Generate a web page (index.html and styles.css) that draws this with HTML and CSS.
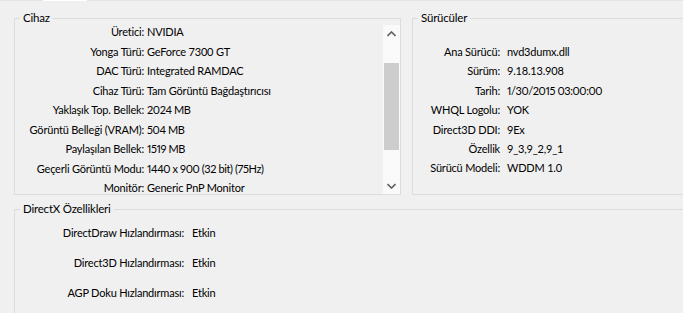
FILE: index.html
```html
<!DOCTYPE html>
<html lang="tr">
<head>
    <meta charset="UTF-8">
    <title>Ekran</title>
    <link rel="stylesheet" href="styles.css">
</head>
<body>
    <!-- Tab strip edge -->
    <div class="tab-edge"><span class="tab-selected"></span></div>

    <div class="page">
        <div class="top-row">
            <!-- Cihaz -->
            <fieldset class="group device">
                <legend>Cihaz</legend>
                <div class="list">
                    <div class="rows">
                        <div class="row"><span class="label">Üretici:</span><span class="value">NVIDIA</span></div>
                        <div class="row"><span class="label">Yonga Türü:</span><span class="value">GeForce 7300 GT</span></div>
                        <div class="row"><span class="label">DAC Türü:</span><span class="value">Integrated RAMDAC</span></div>
                        <div class="row"><span class="label">Cihaz Türü:</span><span class="value">Tam Görüntü Bağdaştırıcısı</span></div>
                        <div class="row"><span class="label">Yaklaşık Top. Bellek:</span><span class="value num">2024 MB</span></div>
                        <div class="row"><span class="label">Görüntü Belleği (VRAM):</span><span class="value num">504 MB</span></div>
                        <div class="row"><span class="label">Paylaşılan Bellek:</span><span class="value num">1519 MB</span></div>
                        <div class="row"><span class="label">Geçerli Görüntü Modu:</span><span class="value num">1440 x 900 (32 bit) (75Hz)</span></div>
                        <div class="row"><span class="label">Monitör:</span><span class="value">Generic PnP Monitor</span></div>
                    </div>
                    <div class="scrollbar">
                        <div class="scroll-btn">
                            <svg width="9" height="6" viewBox="0 0 9 6"><path d="M0.5 5 L4.5 1 L8.5 5" fill="none" stroke="#606060" stroke-width="1.6"/></svg>
                        </div>
                        <div class="track"><div class="thumb"></div></div>
                        <div class="scroll-btn">
                            <svg width="9" height="6" viewBox="0 0 9 6"><path d="M0.5 1 L4.5 5 L8.5 1" fill="none" stroke="#606060" stroke-width="1.6"/></svg>
                        </div>
                    </div>
                </div>
            </fieldset>

            <!-- Sürücüler -->
            <fieldset class="group drivers">
                <legend>Sürücüler</legend>
                <div class="rows">
                    <div class="row"><span class="label">Ana Sürücü:</span><span class="value">nvd3dumx.dll</span></div>
                    <div class="row"><span class="label">Sürüm:</span><span class="value">9.18.13.908</span></div>
                    <div class="row"><span class="label">Tarih:</span><span class="value num">1/30/2015 03:00:00</span></div>
                    <div class="row"><span class="label">WHQL Logolu:</span><span class="value">YOK</span></div>
                    <div class="row"><span class="label">Direct3D DDI:</span><span class="value">9Ex</span></div>
                    <div class="row"><span class="label">Özellik</span><span class="value">9_3,9_2,9_1</span></div>
                    <div class="row"><span class="label">Sürücü Modeli:</span><span class="value">WDDM 1.0</span></div>
                </div>
            </fieldset>
        </div>

        <!-- DirectX Özellikleri -->
        <fieldset class="group features">
            <legend>DirectX Özellikleri</legend>
            <div class="rows">
                <div class="row"><span class="label">DirectDraw Hızlandırması:</span><span class="value">Etkin</span></div>
                <div class="row"><span class="label">Direct3D Hızlandırması:</span><span class="value">Etkin</span></div>
                <div class="row"><span class="label">AGP Doku Hızlandırması:</span><span class="value">Etkin</span></div>
            </div>
        </fieldset>
    </div>
</body>
</html>
```

FILE: styles.css
```css
body {
    margin: 0;
    background-color: #f0f0f0;
    font-family: Lato, "Liberation Sans", sans-serif;
    font-size: 11px;
    letter-spacing: -0.2px;
    color: #000;
    overflow: hidden;
}

.tab-edge {
    height: 1px;
    background-color: #e4e4e4;
}

.tab-selected {
    display: block;
    width: 44px;
    height: 1px;
    margin-left: 43px;
    background-color: #fff;
}

.page {
    padding-left: 14px;
    margin-top: 10px;
}

.top-row {
    display: flex;
    gap: 11px;
}

.group {
    margin: 0;
    padding: 0;
    min-width: 0;
    border: 1px solid #dcdcdc;
    box-sizing: border-box;
}

.group legend {
    margin-left: 5px;
    padding: 0 3px;
    line-height: 14px;
    font-size: 11.5px;
}

.row {
    display: flex;
    line-height: 14px;
    white-space: nowrap;
}

.label {
    flex: none;
    text-align: right;
}

/* values with many digits sit tighter in the reference */
.num {
    font-variant-numeric: proportional-nums;
    letter-spacing: -0.4px;
}

/* Cihaz */
.device {
    width: 387px;
    height: 184px;
    flex: none;
}

.list {
    display: flex;
    height: 169px;
    overflow: hidden;
}

.device .rows {
    flex: 1;
    display: flex;
    flex-direction: column;
    gap: 6.5px;
}

.device .row {
    line-height: 13px;
}

.device .label {
    width: 129px;
}

.device .value {
    margin-left: 3px;
}

.scrollbar {
    width: 17px;
    display: flex;
    flex-direction: column;
    background-color: #fafafa;
}

.scroll-btn {
    height: 17px;
    display: flex;
    align-items: center;
    justify-content: center;
}

.track {
    flex: 1;
    padding-top: 21px;
}

.thumb {
    width: 15px;
    height: 87px;
    margin-left: 1px;
    background-color: #cdcdcd;
}

/* Sürücüler */
.drivers {
    flex: 1;
    height: 184px;
    margin-right: -20px;
}

.drivers .rows {
    display: flex;
    flex-direction: column;
    gap: 5.4px;
    padding-top: 20px;
}

.drivers .label {
    width: 87px;
}

.drivers .value {
    margin-left: 7px;
}

/* DirectX Özellikleri */
.features {
    margin-top: 7px;
    margin-right: -20px;
    height: 160px;
}

.features .rows {
    display: flex;
    flex-direction: column;
    gap: 16px;
    padding-top: 10px;
}

.features .label {
    width: 169px;
}

.features .value {
    margin-left: 8px;
}
```
